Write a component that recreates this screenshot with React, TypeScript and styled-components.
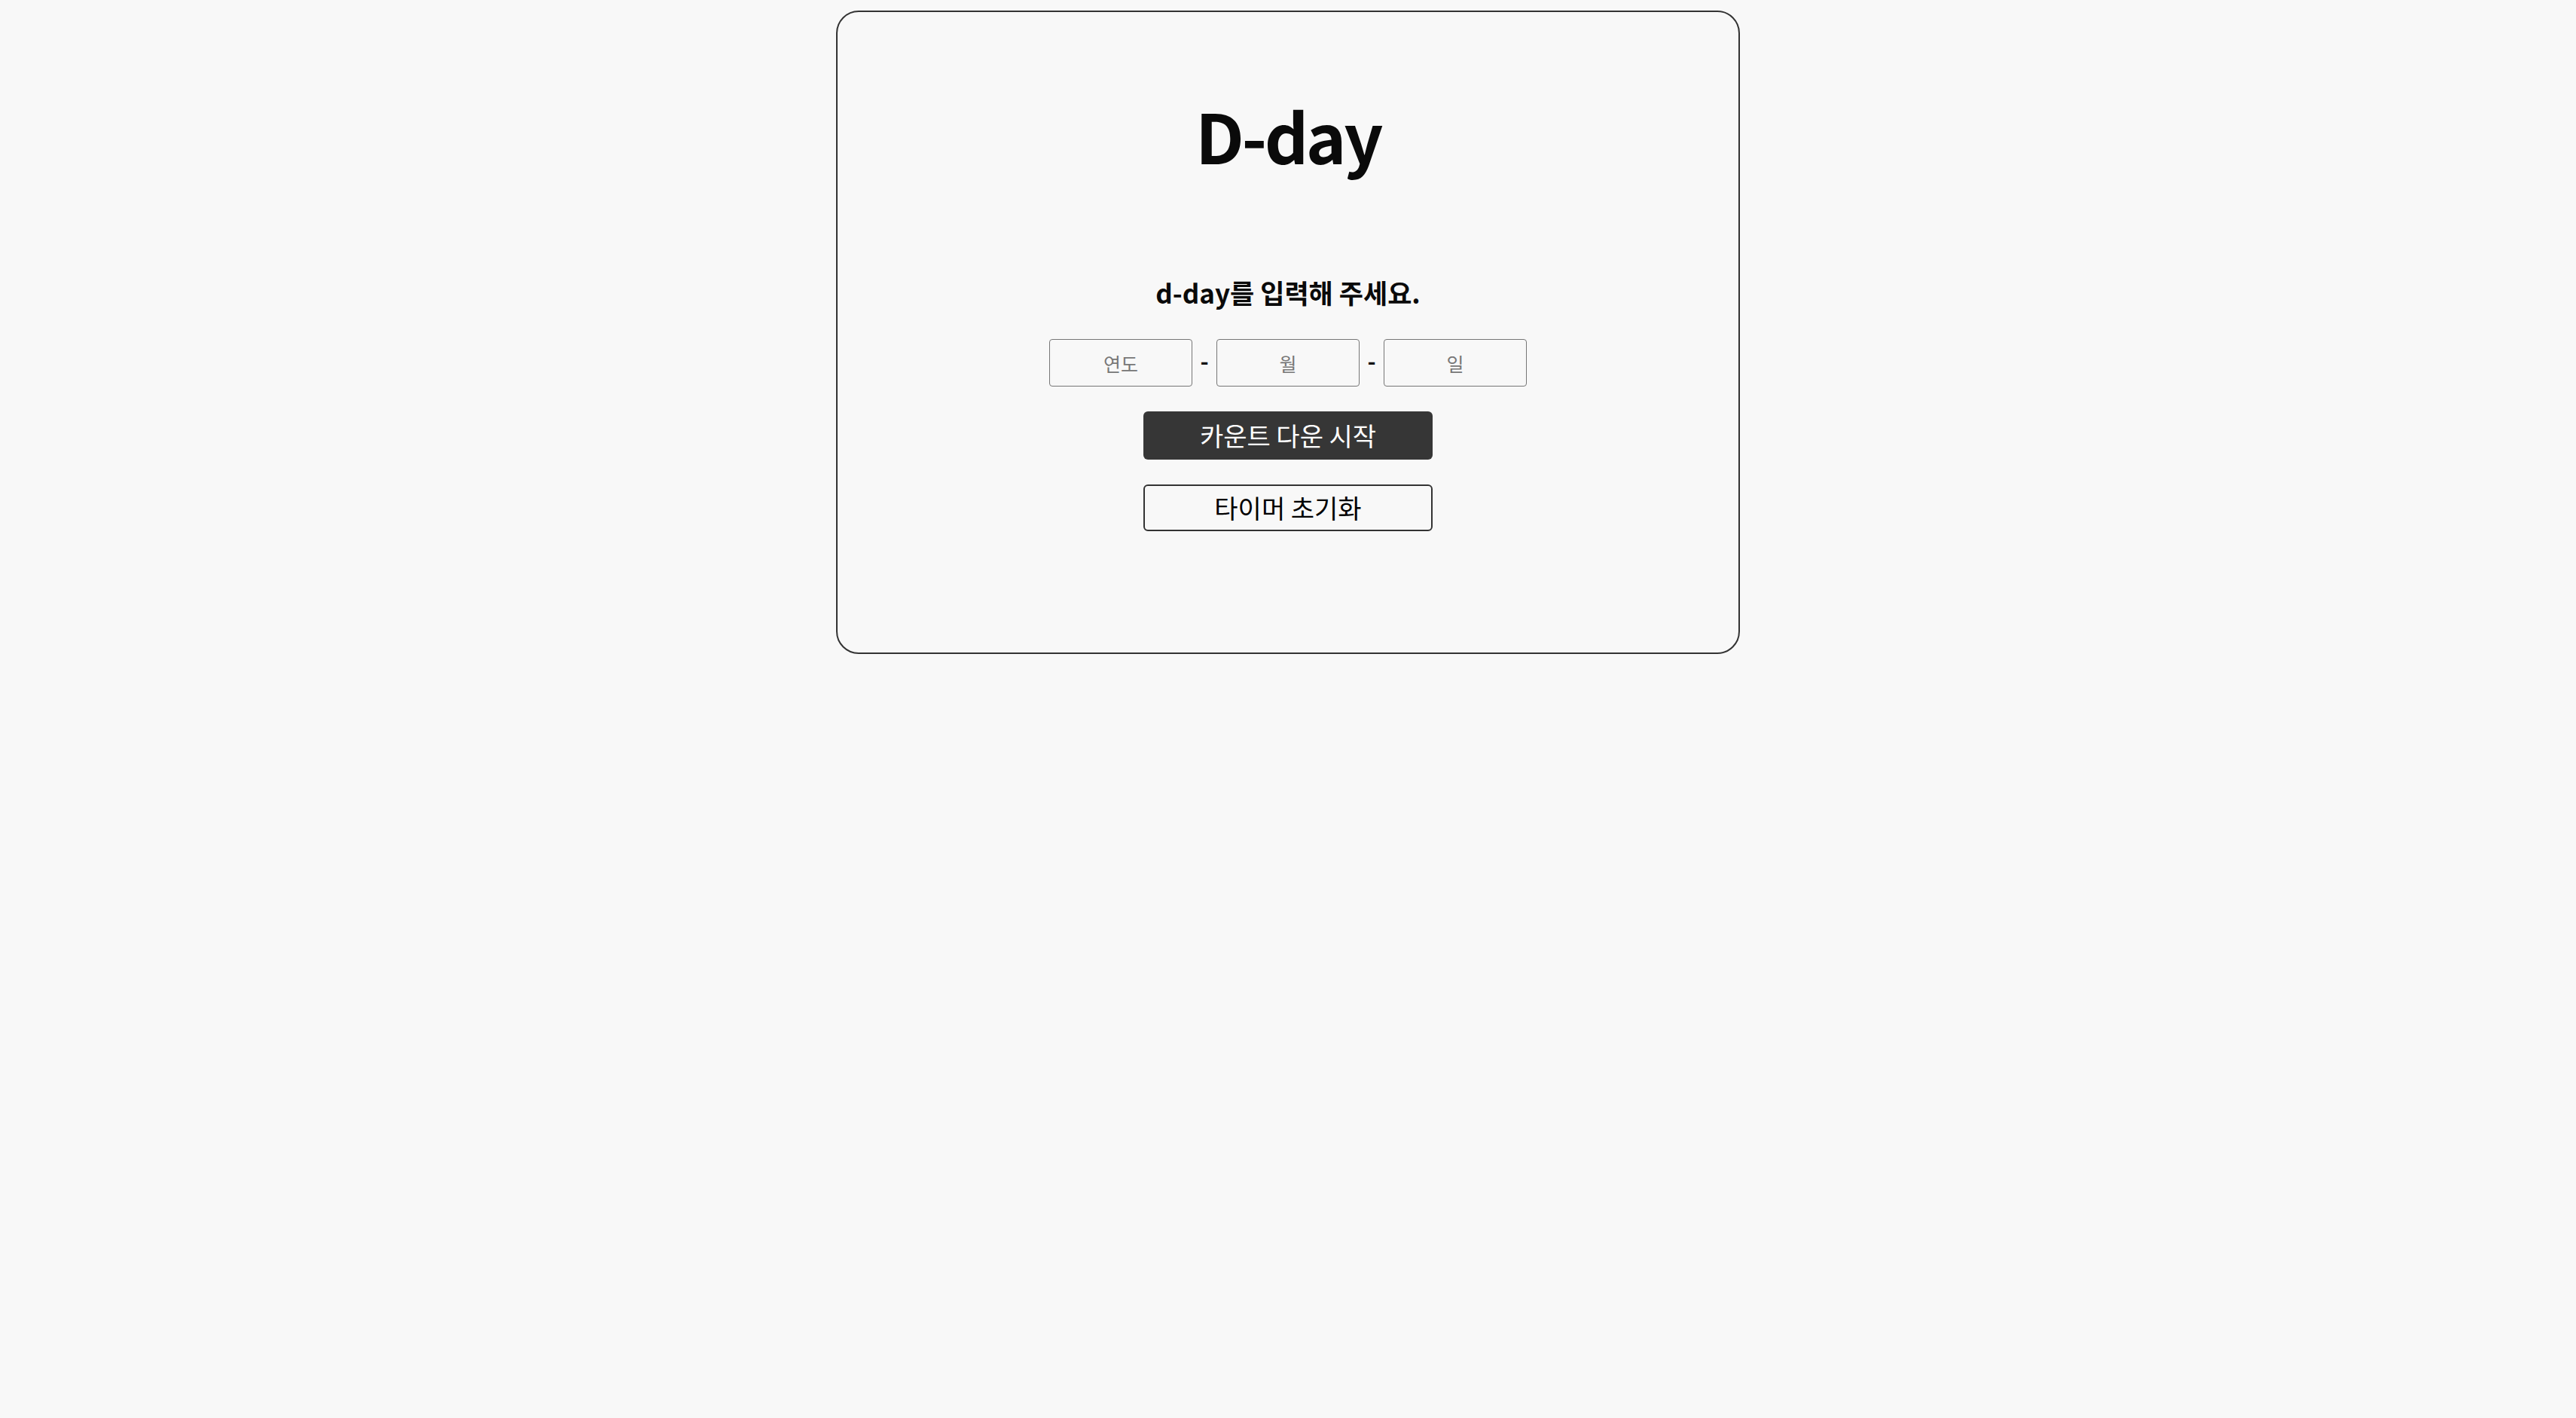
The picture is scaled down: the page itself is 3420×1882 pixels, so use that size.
import React from "react";
import styled, { createGlobalStyle } from "styled-components";

const GlobalStyle = createGlobalStyle`
  html, body {
    margin: 0;
    padding: 0;
    background: #f8f8f8;
    font-family: "Noto Sans CJK KR", "Noto Sans", sans-serif;
  }
  * { box-sizing: border-box; }
`;

const Page = styled.main`
  display: flex;
  justify-content: center;
  padding-top: 14px;
`;

const Card = styled.section`
  width: 1200px;
  height: 854px;
  border: 2px solid #333;
  border-radius: 30px;
  background: #f8f8f8;
  display: flex;
  flex-direction: column;
  align-items: center;
  padding-top: 117px;
`;

const Title = styled.h1`
  margin: 0;
  font-size: 91px;
  line-height: 1;
  font-weight: 700;
  letter-spacing: -3.5px;
  color: #0a0a0a;
`;

const Subtitle = styled.h3`
  margin: 147px 0 0;
  font-size: 35px;
  line-height: 34px;
  font-weight: 700;
  color: #0a0a0a;
`;

const DateRow = styled.div`
  display: flex;
  align-items: center;
  gap: 10px;
  margin-top: 45px;
`;

const DateInput = styled.input`
  width: 190px;
  height: 63px;
  border: 1.5px solid #767676;
  border-radius: 4px;
  background: transparent;
  text-align: center;
  font-family: inherit;
  font-size: 25px;
  color: #333;
  &::placeholder {
    color: #777;
  }
`;

const Dash = styled.span`
  display: inline-block;
  width: 12px;
  text-align: center;
  font-size: 30px;
  font-weight: 700;
  color: #111;
  line-height: 1;
  margin-top: -8px;
`;

const Button = styled.button<{ $primary?: boolean }>`
  width: 384px;
  height: ${(p) => (p.$primary ? "64px" : "62px")};
  margin-top: 33px;
  border-radius: 6px;
  border: ${(p) => (p.$primary ? "none" : "2px solid #333")};
  background: ${(p) => (p.$primary ? "#363636" : "transparent")};
  color: ${(p) => (p.$primary ? "#fff" : "#000")};
  font-family: inherit;
  font-size: 34px;
  line-height: 1;
  cursor: pointer;
`;

export default function App() {
  return (
    <>
      <GlobalStyle />
      <Page>
        <Card>
          <Title>D-day</Title>
          <Subtitle>d-day를 입력해 주세요.</Subtitle>
          <DateRow>
            <DateInput placeholder="연도" />
            <Dash>-</Dash>
            <DateInput placeholder="월" />
            <Dash>-</Dash>
            <DateInput placeholder="일" />
          </DateRow>
          <Button $primary>카운트 다운 시작</Button>
          <Button>타이머 초기화</Button>
        </Card>
      </Page>
    </>
  );
}
